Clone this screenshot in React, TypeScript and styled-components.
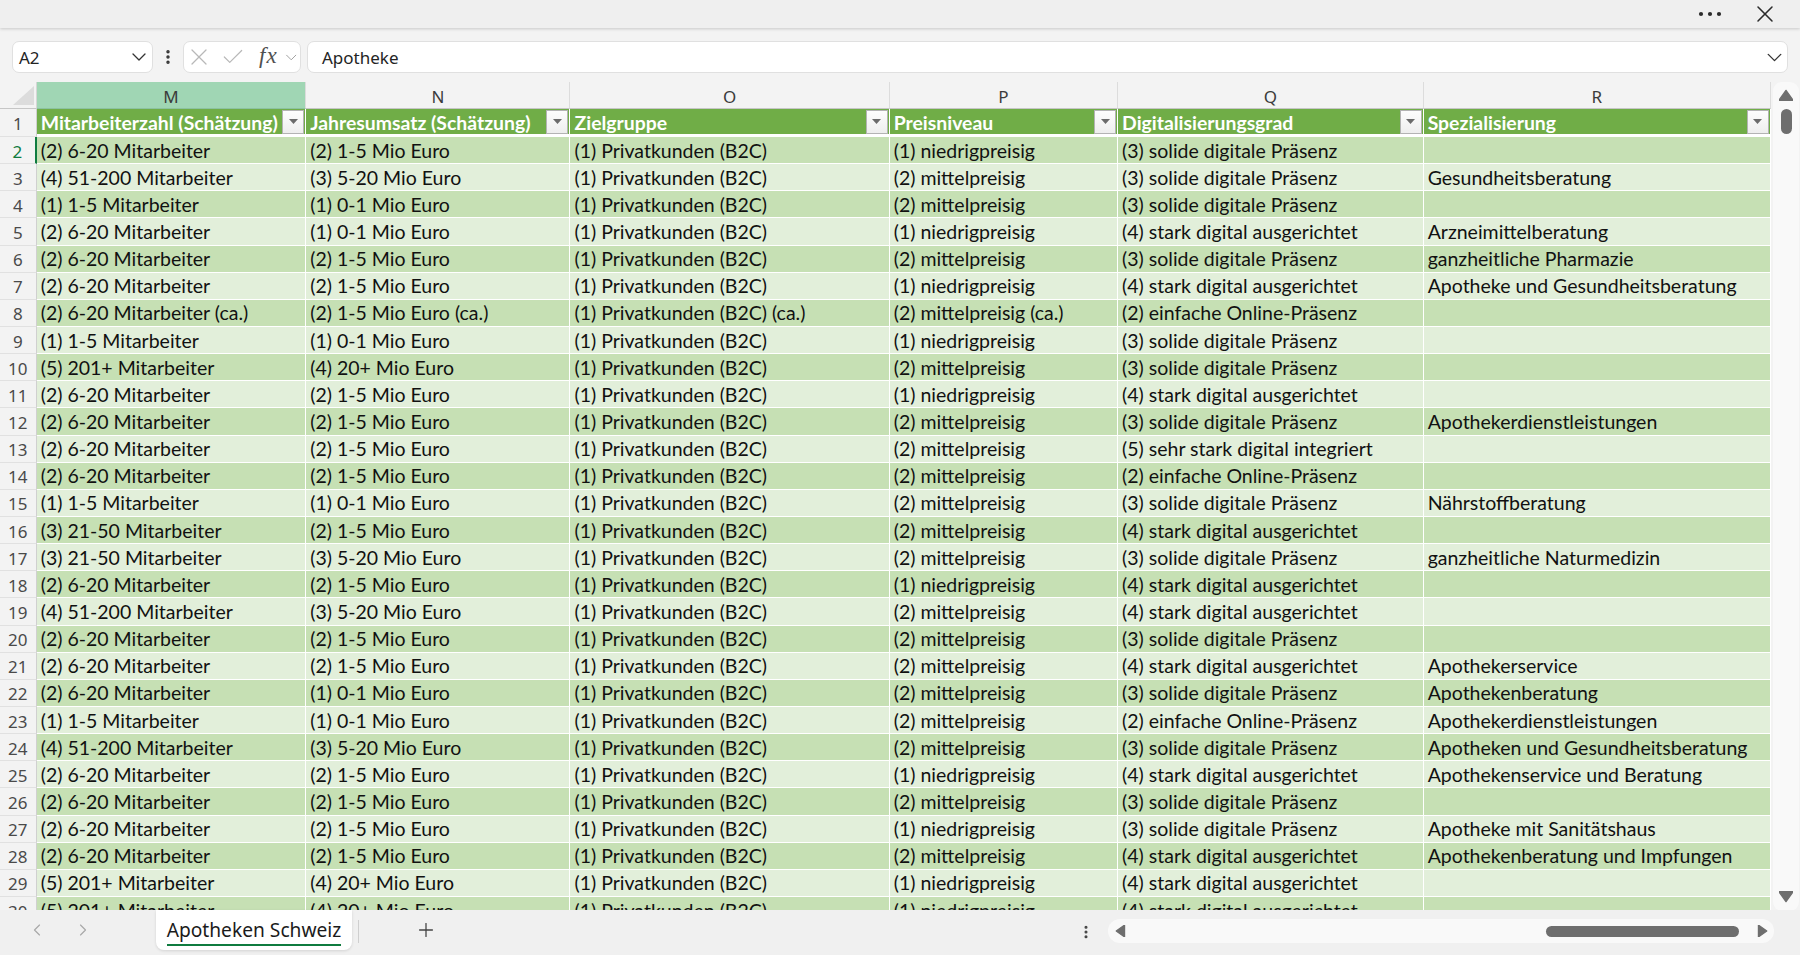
import React from 'react';
import styled, { createGlobalStyle } from 'styled-components';
import { ChevronDown, ChevronLeft, ChevronRight, X, Check, EllipsisVertical, Plus } from 'lucide-react';

const GlobalStyle = createGlobalStyle`
  html, body { margin: 0; padding: 0; }
  body {
    width: 1800px;
    height: 955px;
    overflow: hidden;
    background: #f0f0f0;
  }
  * { box-sizing: border-box; }
`;

const COLS = [
  { key: 'M', width: 269.5, title: 'Mitarbeiterzahl (Schätzung)' },
  { key: 'N', width: 264.3, title: 'Jahresumsatz (Schätzung)' },
  { key: 'O', width: 319.2, title: 'Zielgruppe' },
  { key: 'P', width: 228.4, title: 'Preisniveau' },
  { key: 'Q', width: 305.6, title: 'Digitalisierungsgrad' },
  { key: 'R', width: 347.3, title: 'Spezialisierung' },
];

const TEMPLATE = `36.7px ${COLS.map((c) => `${c.width}px`).join(' ')}`;
const ROW_H = 27.15;

const DATA = [
  '(2) 6-20 Mitarbeiter|(2) 1-5 Mio Euro|(1) Privatkunden (B2C)|(1) niedrigpreisig|(3) solide digitale Präsenz|',
  '(4) 51-200 Mitarbeiter|(3) 5-20 Mio Euro|(1) Privatkunden (B2C)|(2) mittelpreisig|(3) solide digitale Präsenz|Gesundheitsberatung',
  '(1) 1-5 Mitarbeiter|(1) 0-1 Mio Euro|(1) Privatkunden (B2C)|(2) mittelpreisig|(3) solide digitale Präsenz|',
  '(2) 6-20 Mitarbeiter|(1) 0-1 Mio Euro|(1) Privatkunden (B2C)|(1) niedrigpreisig|(4) stark digital ausgerichtet|Arzneimittelberatung',
  '(2) 6-20 Mitarbeiter|(2) 1-5 Mio Euro|(1) Privatkunden (B2C)|(2) mittelpreisig|(3) solide digitale Präsenz|ganzheitliche Pharmazie',
  '(2) 6-20 Mitarbeiter|(2) 1-5 Mio Euro|(1) Privatkunden (B2C)|(1) niedrigpreisig|(4) stark digital ausgerichtet|Apotheke und Gesundheitsberatung',
  '(2) 6-20 Mitarbeiter (ca.)|(2) 1-5 Mio Euro (ca.)|(1) Privatkunden (B2C) (ca.)|(2) mittelpreisig (ca.)|(2) einfache Online-Präsenz|',
  '(1) 1-5 Mitarbeiter|(1) 0-1 Mio Euro|(1) Privatkunden (B2C)|(1) niedrigpreisig|(3) solide digitale Präsenz|',
  '(5) 201+ Mitarbeiter|(4) 20+ Mio Euro|(1) Privatkunden (B2C)|(2) mittelpreisig|(3) solide digitale Präsenz|',
  '(2) 6-20 Mitarbeiter|(2) 1-5 Mio Euro|(1) Privatkunden (B2C)|(1) niedrigpreisig|(4) stark digital ausgerichtet|',
  '(2) 6-20 Mitarbeiter|(2) 1-5 Mio Euro|(1) Privatkunden (B2C)|(2) mittelpreisig|(3) solide digitale Präsenz|Apothekerdienstleistungen',
  '(2) 6-20 Mitarbeiter|(2) 1-5 Mio Euro|(1) Privatkunden (B2C)|(2) mittelpreisig|(5) sehr stark digital integriert|',
  '(2) 6-20 Mitarbeiter|(2) 1-5 Mio Euro|(1) Privatkunden (B2C)|(2) mittelpreisig|(2) einfache Online-Präsenz|',
  '(1) 1-5 Mitarbeiter|(1) 0-1 Mio Euro|(1) Privatkunden (B2C)|(2) mittelpreisig|(3) solide digitale Präsenz|Nährstoffberatung',
  '(3) 21-50 Mitarbeiter|(2) 1-5 Mio Euro|(1) Privatkunden (B2C)|(2) mittelpreisig|(4) stark digital ausgerichtet|',
  '(3) 21-50 Mitarbeiter|(3) 5-20 Mio Euro|(1) Privatkunden (B2C)|(2) mittelpreisig|(3) solide digitale Präsenz|ganzheitliche Naturmedizin',
  '(2) 6-20 Mitarbeiter|(2) 1-5 Mio Euro|(1) Privatkunden (B2C)|(1) niedrigpreisig|(4) stark digital ausgerichtet|',
  '(4) 51-200 Mitarbeiter|(3) 5-20 Mio Euro|(1) Privatkunden (B2C)|(2) mittelpreisig|(4) stark digital ausgerichtet|',
  '(2) 6-20 Mitarbeiter|(2) 1-5 Mio Euro|(1) Privatkunden (B2C)|(2) mittelpreisig|(3) solide digitale Präsenz|',
  '(2) 6-20 Mitarbeiter|(2) 1-5 Mio Euro|(1) Privatkunden (B2C)|(2) mittelpreisig|(4) stark digital ausgerichtet|Apothekerservice',
  '(2) 6-20 Mitarbeiter|(1) 0-1 Mio Euro|(1) Privatkunden (B2C)|(2) mittelpreisig|(3) solide digitale Präsenz|Apothekenberatung',
  '(1) 1-5 Mitarbeiter|(1) 0-1 Mio Euro|(1) Privatkunden (B2C)|(2) mittelpreisig|(2) einfache Online-Präsenz|Apothekerdienstleistungen',
  '(4) 51-200 Mitarbeiter|(3) 5-20 Mio Euro|(1) Privatkunden (B2C)|(2) mittelpreisig|(3) solide digitale Präsenz|Apotheken und Gesundheitsberatung',
  '(2) 6-20 Mitarbeiter|(2) 1-5 Mio Euro|(1) Privatkunden (B2C)|(1) niedrigpreisig|(4) stark digital ausgerichtet|Apothekenservice und Beratung',
  '(2) 6-20 Mitarbeiter|(2) 1-5 Mio Euro|(1) Privatkunden (B2C)|(2) mittelpreisig|(3) solide digitale Präsenz|',
  '(2) 6-20 Mitarbeiter|(2) 1-5 Mio Euro|(1) Privatkunden (B2C)|(1) niedrigpreisig|(3) solide digitale Präsenz|Apotheke mit Sanitätshaus',
  '(2) 6-20 Mitarbeiter|(2) 1-5 Mio Euro|(1) Privatkunden (B2C)|(2) mittelpreisig|(4) stark digital ausgerichtet|Apothekenberatung und Impfungen',
  '(5) 201+ Mitarbeiter|(4) 20+ Mio Euro|(1) Privatkunden (B2C)|(1) niedrigpreisig|(4) stark digital ausgerichtet|',
  '(5) 201+ Mitarbeiter|(4) 20+ Mio Euro|(1) Privatkunden (B2C)|(1) niedrigpreisig|(4) stark digital ausgerichtet|',
].map((line) => line.split('|'));

const UI_FONT = `"Noto Sans", "Open Sans", sans-serif`;
const CELL_FONT = `Lato, "Noto Sans", sans-serif`;

const Shell = styled.div`
  width: 1800px;
  height: 955px;
  display: flex;
  flex-direction: column;
  background: #f0f0f0;
  font-family: ${UI_FONT};
  color: #242424;
`;

/* window title strip */
const TopBar = styled.div`
  flex: none;
  height: 28px;
  display: flex;
  align-items: center;
  justify-content: flex-end;
  gap: 29px;
  padding-right: 21px;
  background: #efefef;
  box-shadow: 0 1px 3px rgba(0, 0, 0, 0.18);
  position: relative;
  z-index: 2;
  color: #2b2b2b;
`;

const FormulaBar = styled.div`
  flex: none;
  height: 54px;
  display: flex;
  align-items: flex-start;
  padding: 13px 12px 0 12px;
  background: #f3f3f3;
`;

const Field = styled.div<{ $w?: number }>`
  height: 32px;
  ${(p) => (p.$w ? `width: ${p.$w}px; flex: none;` : 'flex: 1;')}
  display: flex;
  align-items: center;
  background: #fff;
  border: 1px solid #e0e0e0;
  border-radius: 7px;
  font-size: 17px;
  color: #242424;
`;

const FieldText = styled.span`
  flex: 1;
  padding-left: 6px;
`;

const FormulaText = styled.span`
  flex: 1;
  padding-left: 14px;
`;

const Splitter = styled.div`
  width: 30px;
  flex: none;
  height: 32px;
  display: flex;
  align-items: center;
  justify-content: center;
  color: #333;
`;

const FxGroup = styled.div`
  display: flex;
  align-items: center;
  padding-left: 1px;
  color: #b8b8b8;
`;

const FxLabel = styled.span`
  font-family: "Liberation Serif", serif;
  font-style: italic;
  font-size: 23px;
  line-height: 1;
  color: #505050;
  letter-spacing: 1px;
  margin-left: 13px;
  margin-top: -3px;
`;

const Gap = styled.div<{ $w: number }>`
  width: ${(p) => p.$w}px;
  flex: none;
`;

const SheetArea = styled.div`
  flex: none;
  height: 828px;
  display: flex;
  align-items: flex-start;
  background: #f3f3f3;
`;

const Grid = styled.div`
  width: 1771px;
  height: 828px;
  flex: none;
  overflow: hidden;
  background: #fff;
`;

const Row = styled.div<{ $h: number }>`
  display: grid;
  grid-template-columns: ${TEMPLATE};
  height: ${(p) => p.$h}px;
`;

const Corner = styled.div`
  background: #f3f3f3;
  border-right: 1px solid #d6d6d6;
  border-bottom: 1px solid #c6c6c6;
  display: flex;
  align-items: flex-end;
  justify-content: flex-end;
  padding: 0 2px 3px 0;
`;

const ColHead = styled.div<{ $active?: boolean }>`
  background: ${(p) => (p.$active ? '#a0d6b4' : '#f3f3f3')};
  border-right: 1px solid #dcdcdc;
  border-bottom: 1px solid ${(p) => (p.$active ? '#8cc2a0' : '#c6c6c6')};
  display: flex;
  align-items: center;
  justify-content: center;
  padding-top: 2px;
  font-size: 17px;
  color: #3b3b3b;
`;

const RowHead = styled.div<{ $active?: boolean }>`
  background: #f3f3f3;
  border-right: ${(p) => (p.$active ? '2px solid #107c41' : '1px solid #d0d0d0')};
  border-bottom: 1px solid #e1e1e1;
  display: flex;
  align-items: center;
  justify-content: center;
  padding-top: 2px;
  font-size: 17px;
  color: ${(p) => (p.$active ? '#107c41' : '#4a4a4a')};
`;

const HeadCell = styled.div`
  background: #70ad47;
  border-right: 1px solid #fff;
  border-bottom: 3px solid #fff;
  display: flex;
  align-items: center;
  padding-left: 4px;
  padding-right: 1px;
  font-family: ${CELL_FONT};
  font-weight: 700;
  font-size: 19.4px;
  color: #fff;
  white-space: nowrap;
  overflow: hidden;
`;

const HeadTitle = styled.span`
  flex: 1;
  padding-top: 1px;
`;

const FilterButton = styled.div`
  width: 22px;
  height: 24px;
  flex: none;
  background: linear-gradient(#fdfdfd, #eeeeee);
  border: 1px solid #b3b3b3;
  display: flex;
  align-items: center;
  justify-content: center;
`;

const Cell = styled.div<{ $alt: boolean }>`
  background: ${(p) => (p.$alt ? '#e2efda' : '#c6e0b4')};
  border-right: 1px solid #fff;
  border-bottom: 1px solid #fff;
  display: flex;
  align-items: center;
  padding: 0 0 0 4px;
  font-family: ${CELL_FONT};
  font-size: 19.5px;
  color: #111;
  white-space: nowrap;
  overflow: hidden;
`;

const VScroll = styled.div`
  width: 26px;
  height: 829px;
  margin-left: 2px;
  flex: none;
  background: #f9f9f9;
  border-radius: 9px;
  display: flex;
  flex-direction: column;
  align-items: center;
  padding: 7px 0 8px;
`;

const VThumb = styled.div`
  width: 11px;
  height: 25px;
  margin-top: 6px;
  border-radius: 6px;
  background: #6e6e6e;
`;

const Fill = styled.div`
  flex: 1;
`;

const BottomBar = styled.div`
  flex: 1;
  display: flex;
  align-items: flex-start;
  background: #f0f0f0;
  padding-left: 14px;
`;

const NavButton = styled.div`
  width: 46px;
  height: 40px;
  flex: none;
  display: flex;
  align-items: center;
  justify-content: center;
  color: #a8a8a8;
`;

const Tab = styled.div`
  width: 196px;
  height: 40px;
  flex: none;
  margin-left: 50px;
  background: #fff;
  border-radius: 0 0 8px 8px;
  box-shadow: 0 1px 3px rgba(0, 0, 0, 0.12);
  display: flex;
  flex-direction: column;
  align-items: center;
  justify-content: center;
  font-size: 19.2px;
  color: #1b1b1b;
`;

const TabLabel = styled.span`
  padding-top: 2px;
  border-bottom: 2.5px solid #0f7b3f;
  line-height: 28px;
  white-space: nowrap;
`;

const TabDivider = styled.div`
  width: 1px;
  height: 23px;
  margin: 10px 0 0 6px;
  background: #cfcfcf;
  flex: none;
`;

const AddButton = styled.div`
  width: 40px;
  height: 40px;
  margin-left: 47px;
  flex: none;
  display: flex;
  align-items: center;
  justify-content: center;
  color: #444;
`;

const DotsHandle = styled.div`
  width: 16px;
  height: 44px;
  margin-left: 632px;
  flex: none;
  display: flex;
  align-items: center;
  justify-content: center;
  color: #444;
`;

const HScroll = styled.div`
  width: 666px;
  height: 24px;
  margin: 9px 0 0 14px;
  flex: none;
  background: #f9f9f9;
  border-radius: 12px;
  display: flex;
  align-items: center;
  padding: 0 6px 0 7px;
`;

const HThumb = styled.div`
  width: 193px;
  height: 11px;
  margin-left: 419px;
  flex: none;
  border-radius: 6px;
  background: #6e6e6e;
`;

const Tri = ({ dir, size = 9, color = '#6e6e6e' }: { dir: 'up' | 'down' | 'left' | 'right'; size?: number; color?: string }) => {
  const pts = {
    up: '0,8 5,1 10,8',
    down: '0,2 5,9 10,2',
    left: '8,0 1,5 8,10',
    right: '2,0 9,5 2,10',
  }[dir];
  return (
    <svg width={size} height={size} viewBox="0 0 10 10" style={{ flex: 'none' }}>
      <polygon points={pts} fill={color} strokeLinejoin="round" stroke={color} strokeWidth="1" />
    </svg>
  );
};

const MoreDots = () => (
  <svg width="24" height="6" viewBox="0 0 24 6">
    <circle cx="3" cy="3" r="2.1" fill="currentColor" />
    <circle cx="12" cy="3" r="2.1" fill="currentColor" />
    <circle cx="21" cy="3" r="2.1" fill="currentColor" />
  </svg>
);

const App: React.FC = () => {
  return (
    <Shell>
      <GlobalStyle />
      <TopBar>
        <MoreDots />
        <X size={28} strokeWidth={1.3} />
      </TopBar>

      <FormulaBar>
        <Field $w={141}>
          <FieldText>A2</FieldText>
          <ChevronDown size={24} strokeWidth={1.3} color="#333" style={{ marginRight: 1 }} />
        </Field>
        <Splitter>
          <EllipsisVertical size={18} strokeWidth={2.6} />
        </Splitter>
        <Field $w={118}>
          <FxGroup>
            <X size={28} strokeWidth={1.1} />
            <Gap $w={7} />
            <Check size={26} strokeWidth={1.1} />
            <FxLabel>fx</FxLabel>
          </FxGroup>
          <ChevronDown size={19} strokeWidth={1.2} color="#9a9a9a" style={{ marginLeft: 4 }} />
        </Field>
        <Gap $w={6} />
        <Field>
          <FormulaText>Apotheke</FormulaText>
          <ChevronDown size={25} strokeWidth={1.3} color="#333" />
        </Field>
      </FormulaBar>

      <SheetArea>
        <Grid>
          <Row $h={27}>
            <Corner>
              <svg width="21" height="19" viewBox="0 0 21 19">
                <polygon points="21,0 21,19 0,19" fill="#dcdcdc" />
              </svg>
            </Corner>
            {COLS.map((c) => (
              <ColHead key={c.key} $active={c.key === 'M'}>
                {c.key}
              </ColHead>
            ))}
          </Row>
          <Row $h={28}>
            <RowHead>1</RowHead>
            {COLS.map((c) => (
              <HeadCell key={c.key}>
                <HeadTitle>{c.title}</HeadTitle>
                <FilterButton>
                  <svg width="9" height="5" viewBox="0 0 9 5">
                    <polygon points="0,0 9,0 4.5,5" fill="#6b6b6b" />
                  </svg>
                </FilterButton>
              </HeadCell>
            ))}
          </Row>
          {DATA.map((cells, i) => (
            <Row key={i} $h={ROW_H}>
              <RowHead $active={i === 0}>{i + 2}</RowHead>
              {cells.map((text, j) => (
                <Cell key={j} $alt={i % 2 === 1}>
                  {text}
                </Cell>
              ))}
            </Row>
          ))}
        </Grid>
        <VScroll>
          <Tri dir="up" size={14} />
          <VThumb />
          <Fill />
          <Tri dir="down" size={14} />
        </VScroll>
      </SheetArea>

      <BottomBar>
        <NavButton>
          <ChevronLeft size={20} strokeWidth={1.4} />
        </NavButton>
        <NavButton>
          <ChevronRight size={20} strokeWidth={1.4} />
        </NavButton>
        <Tab>
          <TabLabel>Apotheken Schweiz</TabLabel>
        </Tab>
        <TabDivider />
        <AddButton>
          <Plus size={22} strokeWidth={1.4} />
        </AddButton>
        <DotsHandle>
          <EllipsisVertical size={18} strokeWidth={2.6} />
        </DotsHandle>
        <HScroll>
          <Tri dir="left" size={12} />
          <HThumb />
          <Fill />
          <Tri dir="right" size={12} />
        </HScroll>
      </BottomBar>
    </Shell>
  );
};

export default App;
